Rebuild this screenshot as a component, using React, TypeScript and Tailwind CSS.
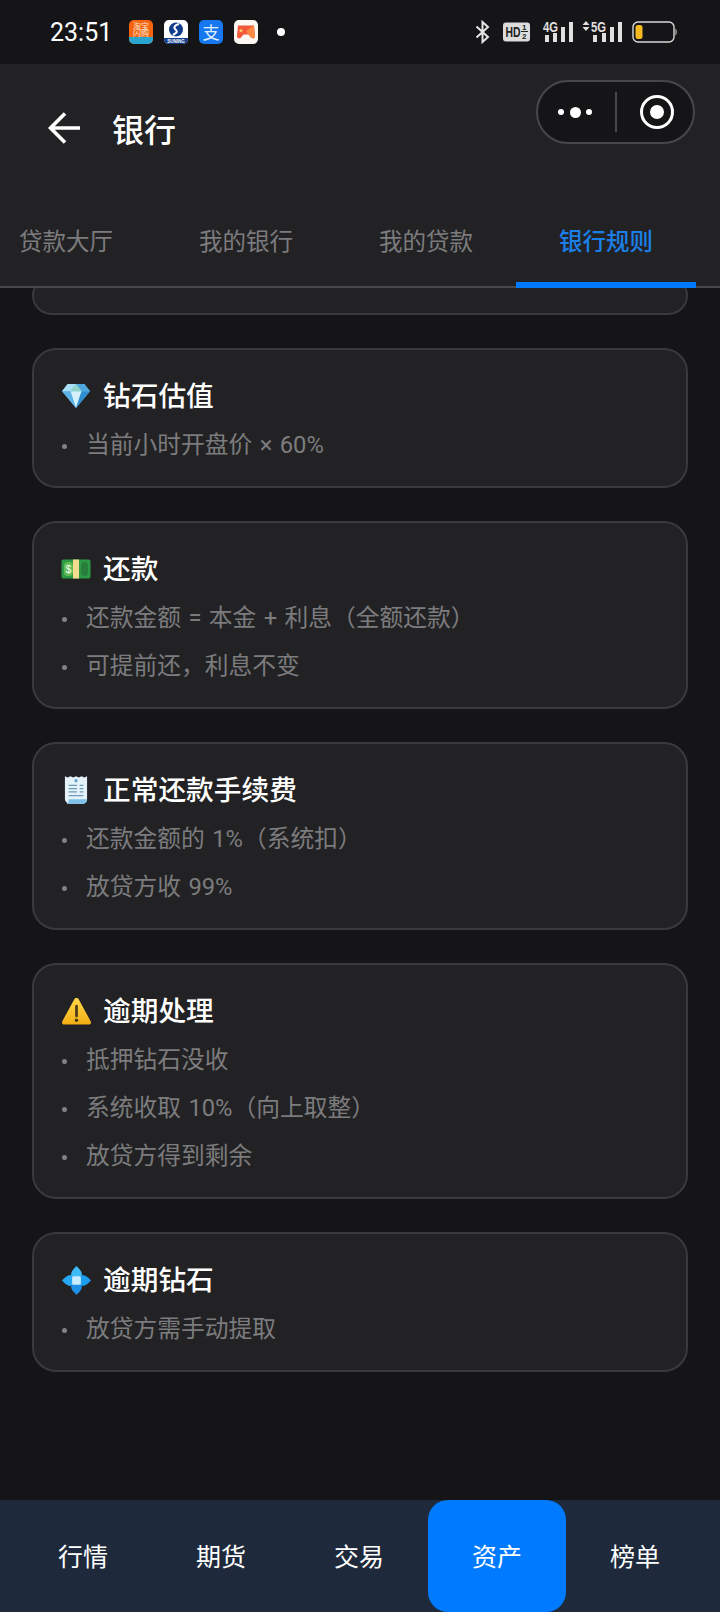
const F = '"Noto Sans CJK SC", sans-serif';
const L = 'Roboto, "Noto Sans CJK SC", sans-serif';
import React from 'react';

function Diamond() {
  return (
    <svg width="30" height="26" viewBox="0 0 32 28">
      <path d="M7 1H25L31 9L16 27L1 9Z" fill="#7cc6ee" />
      <path d="M7 1H16L10 9H1Z" fill="#a9def7" />
      <path d="M16 1H25L31 9H22Z" fill="#4fa6de" />
      <path d="M10 9H22L16 27Z" fill="#d3f0fb" />
      <path d="M1 9H10L16 27Z" fill="#5db3e6" />
      <path d="M22 9H31L16 27Z" fill="#2f8fd2" />
      <path d="M16 1L22 9H10Z" fill="#8fd3c9" />
    </svg>
  );
}
function Money() {
  return (
    <svg width="30" height="20" viewBox="0 0 30 20">
      <rect x="0.5" y="0.5" width="29" height="19" rx="2" fill="#2f9a45" />
      <rect x="3" y="3" width="9" height="14" rx="4" fill="#63bd55" />
      <rect x="20" y="3" width="7" height="14" rx="3.5" fill="#287f3c" />
      <rect x="12" y="0.5" width="6" height="19" fill="#f4dc90" />
      <text x="7.5" y="14" fontSize="10" fill="#fff" textAnchor="middle" fontFamily="Liberation Sans, sans-serif">$</text>
    </svg>
  );
}
function Receipt() {
  return (
    <svg width="24" height="30" viewBox="0 0 26 32">
      <path d="M1 1L4 2.5L7 1L10 2.5L13 1L16 2.5L19 1L22 2.5L25 1V26C25 29 23 31 20 31H3C5 30 1 29 1 26Z" fill="#e4f2fa" />
      <path d="M3 31C5 30 5 28 5 26H25C25 29 23 31 20 31Z" fill="#7fc0e8" />
      <circle cx="13" cy="6" r="1.8" fill="#6aa4c8" />
      <path d="M5 11H14M17 11H21M5 14.5H14M17 14.5H21M5 18H14M17 18H21M5 22H21" stroke="#6f9ab5" strokeWidth="1.3" />
    </svg>
  );
}
function Warning() {
  return (
    <svg width="31" height="30" viewBox="0 0 32 30">
      <defs>
        <linearGradient id="w" x1="0" y1="0" x2="0" y2="1">
          <stop offset="0" stopColor="#ffd84a" />
          <stop offset="1" stopColor="#f2ae14" />
        </linearGradient>
      </defs>
      <path d="M16 1.5C17 1.5 17.8 2 18.4 3L30.6 25.5C31.6 27.4 30.5 29 28.6 29H3.4C1.5 29 .4 27.4 1.4 25.5L13.6 3C14.2 2 15 1.5 16 1.5Z" fill="url(#w)" />
      <rect x="14.6" y="8.5" width="2.8" height="13" rx="1.4" fill="#4a3a1a" />
      <circle cx="16" cy="24.6" r="1.8" fill="#4a3a1a" />
    </svg>
  );
}
function Flower() {
  return (
    <svg width="31" height="31" viewBox="0 0 32 32">
      <path d="M16 1C19 4 22 7 21.5 10.5L16 16L10.5 10.5C10 7 13 4 16 1Z" fill="#3dbcf7" />
      <path d="M31 16C28 19 25 22 21.5 21.5L16 16L21.5 10.5C25 10 28 13 31 16Z" fill="#1b9df0" />
      <path d="M16 31C13 28 10 25 10.5 21.5L16 16L21.5 21.5C22 25 19 28 16 31Z" fill="#1f8fe8" />
      <path d="M1 16C4 13 7 10 10.5 10.5L16 16L10.5 21.5C7 22 4 19 1 16Z" fill="#27a8f4" />
      <rect x="11.5" y="11.5" width="9" height="9" rx="1" fill="#c9ecff" />
    </svg>
  );
}

function StatusApps() {
  return (
    <div className="flex items-center gap-[11px] ml-[17px]">
      <svg width="24" height="24" viewBox="0 0 24 24">
        <rect width="24" height="24" rx="5" fill="#f4640f" />
        <path d="M0 17H24V19A5 5 0 0 1 19 24H5A5 5 0 0 1 0 19Z" fill="#2aa5cf" />
        <text x="12" y="9" fontSize="8" fill="#fde9d6" textAnchor="middle" fontFamily="Noto Sans CJK SC, sans-serif">淘宝</text>
        <text x="12" y="16" fontSize="8" fill="#fde9d6" textAnchor="middle" fontFamily="Noto Sans CJK SC, sans-serif">闪购</text>
      </svg>
      <svg width="24" height="24" viewBox="0 0 24 24">
        <rect width="24" height="24" rx="5" fill="#fff" />
        <path d="M0 18H24V19A5 5 0 0 1 19 24H5A5 5 0 0 1 0 19Z" fill="#113c8c" />
        <circle cx="12" cy="9.5" r="7" fill="#113c8c" />
        <path d="M15 4C11 5 9.5 7 11 9C13 11 14.5 12 9 15" stroke="#fff" strokeWidth="2" fill="none" />
        <text x="12" y="23" fontSize="4.5" fontWeight="700" fill="#fff" textAnchor="middle" fontFamily="Liberation Sans, sans-serif">SUNING</text>
      </svg>
      <svg width="24" height="24" viewBox="0 0 24 24">
        <rect width="24" height="24" rx="5" fill="#1677ef" />
        <text x="12" y="18.5" fontSize="17" fill="#e3f1ff" textAnchor="middle" fontFamily="Noto Sans CJK SC, sans-serif">支</text>
      </svg>
      <svg width="24" height="24" viewBox="0 0 24 24">
        <rect width="24" height="24" rx="5" fill="#fbf7f2" />
        <path d="M4 5.5H20L21 16C21 18.5 18.5 19 17 17.5L14.5 14.5H9.5L7 17.5C5.5 19 3 18.5 3 16Z" fill="#f4583a" />
        <path d="M12 11L20 5.5L21 16C21 18.5 18.5 19 17 17.5L14.5 14.5Z" fill="#fb8a45" />
        <path d="M7 8.5L7.7 10H9.3L8 11L8.5 12.5L7 11.6L5.5 12.5L6 11L4.7 10H6.3Z" fill="#ffd76a" />
      </svg>
      <div className="w-[8px] h-[8px] rounded-full bg-white ml-[8px]" />
    </div>
  );
}

function StatusRight() {
  return (
    <div className="flex items-center">
      <svg width="15" height="24" viewBox="0 0 15 24" fill="none" stroke="#e6e6e6" strokeWidth="2">
        <path d="M1.5 6.5L13 17L7.5 22V2L13 7L1.5 17.5" />
      </svg>
      <svg width="27" height="20" viewBox="0 0 27 20" className="ml-[13px]">
        <rect width="27" height="19" y="0.5" rx="3" fill="#dcdcdc" />
        <text x="2.5" y="15" fontSize="14" fontWeight="700" fill="#222" textLength="15" lengthAdjust="spacingAndGlyphs" fontFamily="Liberation Sans, sans-serif">HD</text>
        <text x="19" y="8" fontSize="8" fontWeight="700" fill="#222" fontFamily="Liberation Sans, sans-serif">1</text>
        <rect x="18" y="9" width="7" height="1" fill="#222" />
        <text x="19" y="17" fontSize="8" fontWeight="700" fill="#222" fontFamily="Liberation Sans, sans-serif">2</text>
      </svg>
      <svg width="31" height="24" viewBox="0 0 31 24" className="ml-[13px]" fill="#e0e0e0">
        <text x="0" y="12" fontSize="14.5" fontWeight="700" textLength="15" lengthAdjust="spacingAndGlyphs" fontFamily="Liberation Sans, sans-serif">4G</text>
        <rect x="2" y="15" width="4" height="7" />
        <rect x="10" y="13" width="4" height="9" />
        <rect x="18" y="7" width="4" height="15" />
        <rect x="26" y="2" width="4" height="20" />
      </svg>
      <svg width="40" height="24" viewBox="0 0 40 24" className="ml-[8px]" fill="#e0e0e0">
        <path d="M0.5 5L4 1L7.5 5ZM0.5 7L4 11L7.5 7Z" />
        <text x="9" y="12" fontSize="14.5" fontWeight="700" textLength="15" lengthAdjust="spacingAndGlyphs" fontFamily="Liberation Sans, sans-serif">5G</text>
        <rect x="11" y="15" width="4" height="7" />
        <rect x="20" y="13" width="4" height="9" />
        <rect x="28" y="7" width="4" height="15" />
        <rect x="36" y="2" width="4" height="20" />
      </svg>
      <svg width="45" height="22" viewBox="0 0 45 22" className="ml-[10px]">
        <rect x="1" y="1" width="41" height="20" rx="5" fill="none" stroke="#d8d8d8" strokeWidth="1.4" />
        <rect x="3.5" y="4" width="7" height="14" rx="2.5" fill="#f3b91e" />
        <path d="M43.5 7.5C45 8 45 14 43.5 14.5Z" fill="#d8d8d8" />
      </svg>
    </div>
  );
}

function Card({ icon, title, items }: { icon: React.ReactNode; title: string; items: string[] }) {
  return (
    <div className="bg-[#222224] border-2 border-[#3a3a3c] rounded-[24px] pt-[26px] px-[26px] pb-[16px]">
      <div className="flex items-center h-[40px] mb-[6px]">
        <div className="w-[32px] flex justify-center">{icon}</div>
        <div className="ml-[11px] mb-[4px] text-[27.7px] font-medium text-white leading-[40px]">{title}</div>
      </div>
      {items.map((t) => (
        <div key={t} className="flex items-center h-[48px] text-[23.75px] text-[#7c7c7e] [word-spacing:1.5px]" style={{ fontFamily: L }}>
          <div className="w-[5px] h-[5px] rounded-full bg-[#828284] ml-[2px]" />
          <div className="ml-[19px]">{t}</div>
        </div>
      ))}
    </div>
  );
}

const tabs = ['贷款大厅', '我的银行', '我的贷款', '银行规则'];
const nav = ['行情', '期货', '交易', '资产', '榜单'];

export default function App() {
  return (
    <div className="w-[720px] h-[1612px] flex flex-col bg-[#151517] overflow-hidden" style={{ fontFamily: F }}>
      <div className="h-[64px] shrink-0 bg-[#151517] flex items-center justify-between pl-[50px] pr-[43px]">
        <div className="flex items-center">
          <span className="text-[25px] text-white leading-none" style={{ fontFamily: 'Roboto, sans-serif' }}>23:51</span>
          <StatusApps />
        </div>
        <StatusRight />
      </div>
      <div className="h-[136px] shrink-0 bg-[#222224] flex items-start justify-between pl-[48px] pr-[25px] pt-[16px]">
        <div className="flex items-center h-[96px]">
          <svg width="32" height="32" viewBox="0 0 32 32" fill="none" stroke="#fff" strokeWidth="3.6">
            <path d="M32 16H3M17 1.5L2.5 16L17 30.5" />
          </svg>
          <span className="ml-[32px] text-[32px] text-white font-medium leading-none">银行</span>
        </div>
        <div className="w-[159px] h-[64px] rounded-full bg-[#151517] border-2 border-[#48484a] flex items-center">
          <div className="w-[77px] flex items-center justify-center gap-[5.5px] pr-[3px]">
            <div className="w-[6px] h-[6px] rounded-full bg-white" />
            <div className="w-[11px] h-[11px] rounded-full bg-white" />
            <div className="w-[6px] h-[6px] rounded-full bg-white" />
          </div>
          <div className="w-[2px] h-[40px] bg-[#48484a]" />
          <div className="flex-1 flex items-center justify-center pl-[3px]">
            <div className="w-[34px] h-[34px] rounded-full border-[3px] border-white flex items-center justify-center">
              <div className="w-[14px] h-[14px] rounded-full bg-white" />
            </div>
          </div>
        </div>
      </div>
      <div className="h-[88px] shrink-0 bg-[#222224] border-b-2 border-[#48484a] relative z-10">
        <div className="flex -ml-[24px]">
          {tabs.map((t, i) => (
            <div key={t} className={`w-[180px] h-[88px] shrink-0 flex items-start justify-center pt-[20px] text-[23.5px] leading-[40px] ${i === 3 ? 'text-[#1a7fe8] font-medium border-b-[6px] border-[#007aff]' : 'text-[#7c7c7e]'}`}>
              {t}
            </div>
          ))}
        </div>
      </div>
      <div className="flex-1 overflow-hidden px-[32px] flex flex-col gap-[33px] -mt-[12px]">
        <div className="h-[39px] shrink-0 bg-[#222224] border-2 border-[#3a3a3c] rounded-[24px]" />
        <Card icon={<Diamond />} title="钻石估值" items={['当前小时开盘价 × 60%']} />
        <Card icon={<Money />} title="还款" items={['还款金额 = 本金 + 利息（全额还款）', '可提前还，利息不变']} />
        <Card icon={<Receipt />} title="正常还款手续费" items={['还款金额的 1%（系统扣）', '放贷方收 99%']} />
        <Card icon={<Warning />} title="逾期处理" items={['抵押钻石没收', '系统收取 10%（向上取整）', '放贷方得到剩余']} />
        <Card icon={<Flower />} title="逾期钻石" items={['放贷方需手动提取']} />
      </div>
      <div className="h-[112px] shrink-0 bg-[#1e2a3c] flex pl-[14px] pr-[16px]">
        {nav.map((n, i) => (
          <div key={n} className={`flex-1 flex items-center justify-center text-[25px] text-white ${i === 3 ? 'bg-[#007aff] rounded-[20px]' : ''}`}>
            {n}
          </div>
        ))}
      </div>
    </div>
  );
}
